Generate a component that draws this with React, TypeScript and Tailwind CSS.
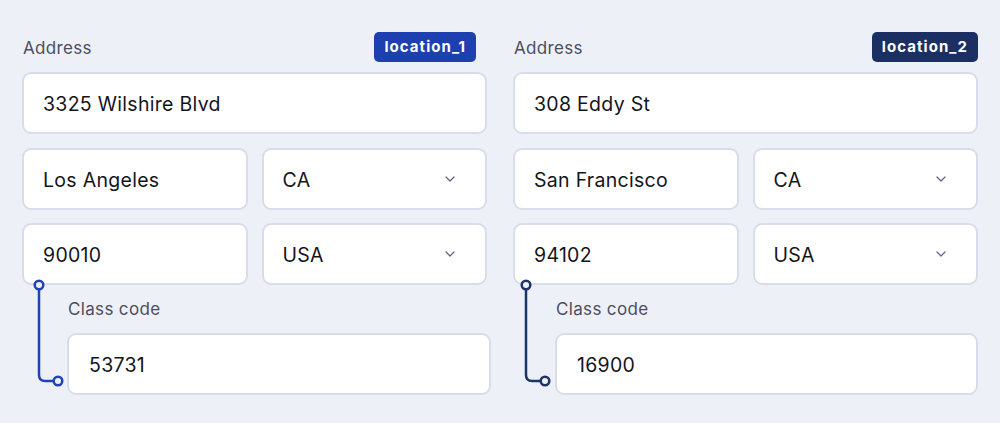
import { ChevronDown } from 'lucide-react'

interface Location {
  id: string
  badge: string
  line: string
  street: string
  city: string
  state: string
  zip: string
  country: string
  classCode: string
  indent: string
  svgLeft: string
}

const locations: Location[] = [
  {
    id: 'location_1',
    badge: 'bg-[#1d3fb0] mr-[11px]',
    line: '#1f43b5',
    street: '3325 Wilshire Blvd',
    city: 'Los Angeles',
    state: 'CA',
    zip: '90010',
    country: 'USA',
    classCode: '53731',
    indent: 'pl-[45px] -mr-[4px]',
    svgLeft: 'left-[10px]',
  },
  {
    id: 'location_2',
    badge: 'bg-[#1c2f63]',
    line: '#1e3366',
    street: '308 Eddy St',
    city: 'San Francisco',
    state: 'CA',
    zip: '94102',
    country: 'USA',
    classCode: '16900',
    indent: 'pl-[42px]',
    svgLeft: 'left-[6px]',
  },
]

// ── Field primitives ───────────────────────────────────────────────────────

function Field({ value, className = '' }: { value: string; className?: string }) {
  return (
    <div className={`flex items-center h-[62px] rounded-[9px] border-2 border-[#d9dce9] bg-white px-[19px] pt-[3px] text-[19.5px] tracking-[0.015em] text-[#14151a] ${className}`}>
      {value}
    </div>
  )
}

function SelectField({ value }: { value: string }) {
  return (
    <div className="flex items-center justify-between h-[62px] rounded-[9px] border-2 border-[#d9dce9] bg-white pl-[19px] pr-[27px] text-[19.5px] tracking-[0.015em] text-[#14151a]">
      <span className="pt-[3px]">{value}</span>
      <ChevronDown size={16} strokeWidth={1.8} className="text-[#5b6385]" />
    </div>
  )
}

// Connector from the zip field down to the class code field
function Connector({ color, className }: { color: string; className: string }) {
  return (
    <svg
      className={`absolute top-[245px] pointer-events-none ${className}`}
      width="40"
      height="115"
      viewBox="0 0 40 115"
      fill="none"
    >
      <path d="M7 12.5 V98 Q7 104 13 104 H21.5" stroke={color} strokeWidth="2.5" />
      <circle cx="7" cy="8" r="4.3" stroke={color} strokeWidth="2.5" fill="#eef0f8" />
      <circle cx="26" cy="104" r="4.3" stroke={color} strokeWidth="2.5" fill="#eef0f8" />
    </svg>
  )
}

function LocationCard({ loc }: { loc: Location }) {
  return (
    <div className="relative flex flex-col">
      <div className="flex items-center justify-between h-[30px]">
        <span className="pl-px pt-[3px] text-[17px] tracking-[0.02em] text-[#4b4e5f]">Address</span>
        <span className={`flex items-center h-[30px] px-[10px] rounded-[5px] text-[15px] font-bold tracking-[0.07em] text-white ${loc.badge}`}>
          {loc.id}
        </span>
      </div>

      <Field value={loc.street} className="mt-[10px]" />

      <div className="grid grid-cols-2 gap-[14px] mt-[14px]">
        <Field value={loc.city} className="h-[61px]" />
        <SelectField value={loc.state} />
      </div>
      <div className="grid grid-cols-2 gap-[14px] mt-[13px]">
        <Field value={loc.zip} />
        <SelectField value={loc.country} />
      </div>

      <div className={`flex flex-col ${loc.indent}`}>
        <span className="mt-[14px] h-[20px] leading-[20px] pl-px text-[17px] tracking-[0.02em] text-[#4b4e5f]">Class code</span>
        <Field value={loc.classCode} className="mt-[14px] h-[61px] px-[20px]" />
      </div>

      <Connector color={loc.line} className={loc.svgLeft} />
    </div>
  )
}

export default function App() {
  return (
    <div
      className="w-[1000px] h-[423px] bg-[#eef0f8] px-[22px] pt-[32px]"
      style={{ fontFamily: 'Inter, "Noto Sans", sans-serif' }}
    >
      <div className="grid grid-cols-2 gap-[26px]">
        {locations.map(loc => (
          <LocationCard key={loc.id} loc={loc} />
        ))}
      </div>
    </div>
  )
}
